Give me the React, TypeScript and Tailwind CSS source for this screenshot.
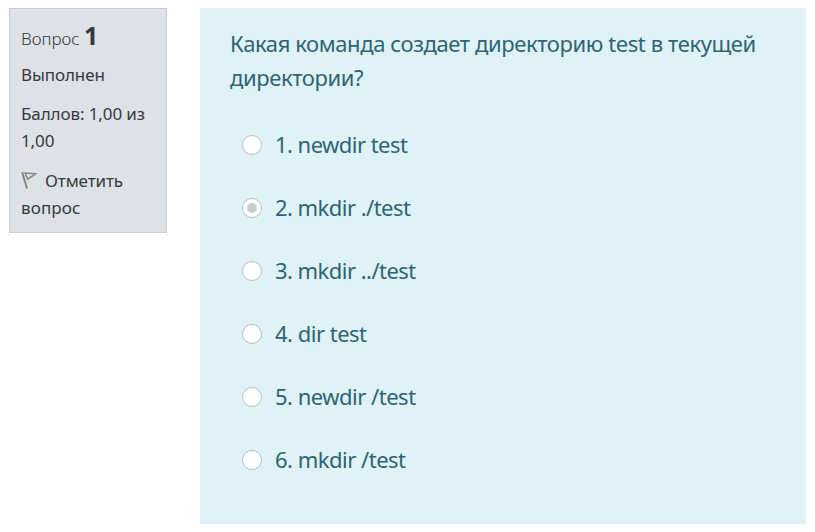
const options = [
  { text: "newdir test", tracking: "tracking-[-0.54px]" },
  { text: "mkdir ./test", tracking: "tracking-[-0.54px]" },
  { text: "mkdir ../test", tracking: "tracking-[-0.54px]" },
  { text: "dir test", tracking: "tracking-[-0.5px]" },
  { text: "newdir /test", tracking: "tracking-[-0.5px]" },
  { text: "mkdir /test", tracking: "tracking-[-0.5px]" },
];

function Flag() {
  return (
    <svg width="17" height="19" viewBox="0 0 17 19" fill="none" className="mr-[7px] inline-block align-[-3px]">
      <path d="M1.2 1.2 6 17.5" stroke="#858585" strokeWidth="2" />
      <path d="M4 2 14.6 2.8 6.8 8.2Z" stroke="#858585" strokeWidth="1.5" />
    </svg>
  );
}

function Radio({ checked }: { checked: boolean }) {
  return (
    <span className="flex size-5 shrink-0 items-center justify-center rounded-full border border-[#b5c0c4] bg-white">
      {checked && <span className="size-[10px] rounded-full bg-[#cbcbcb]" />}
    </span>
  );
}

export default function App() {
  return (
    <div className="flex h-[532px] w-[815px] items-start bg-white pl-[9px] pt-2 font-['Noto_Sans','Open_Sans',sans-serif]">
      <aside className="h-[225px] w-[158px] shrink-0 border border-[#c8ccd6] bg-[#dee1e6] pl-[11px] pt-[10px] text-[17px] leading-[27px] text-[#343a40]">
        <h3 className="h-[42px] whitespace-nowrap leading-[32px]">
          <span className="font-light">Вопрос</span> <b className="text-[25px]">1</b>
        </h3>
        <p className="h-[39px] tracking-[-0.1px]">Выполнен</p>
        <p className="h-[67px] whitespace-nowrap tracking-[-0.1px]">Баллов: 1,00 из<br />1,00</p>
        <p className="whitespace-nowrap tracking-[-0.1px]"><Flag />Отметить<br /><span className="tracking-[0.1px]">вопрос</span></p>
      </aside>
      <main className="ml-[33px] h-[516px] w-[606px] bg-[#def2f8] px-[30px] pt-[18px] text-[22px] text-[#2f6473]">
        <p className="whitespace-nowrap leading-[34px] tracking-[-0.4px]">Какая команда создает директорию test в текущей<br />директории?</p>
        <div className="pl-3 pt-[19px]">
          {options.map((option, i) => (
            <label key={option.text} className="flex h-[63px] items-center gap-[13px]">
              <Radio checked={i === 1} />
              <span className={option.tracking}>{i + 1}. {option.text}</span>
            </label>
          ))}
        </div>
      </main>
    </div>
  );
}
